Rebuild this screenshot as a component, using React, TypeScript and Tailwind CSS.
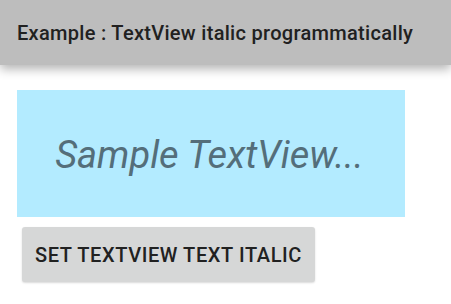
import React from "react";

export default function App() {
  return (
    <div className="w-[451px] h-[304px] bg-white overflow-hidden" style={{ fontFamily: "Roboto, 'Liberation Sans', sans-serif" }}>
      <div className="h-[65px] bg-[#bdbdbd] flex items-center pl-[17px] shadow-[0_4px_10px_rgba(0,0,0,0.3)] relative">
        <span className="text-[20px] font-medium text-[#212121] tracking-[0.3px]">Example : TextView italic programmatically</span>
      </div>
      <div className="pl-[17px] pt-[25px]">
        <div className="w-[388px] h-[127px] bg-[#b3ebff] flex items-center justify-center">
          <span className="text-[38px] italic text-[#546e7a] pr-[3px] pt-[4px]">Sample TextView...</span>
        </div>
        <button className="mt-[10px] ml-[5px] w-[293px] h-[55px] bg-[#d6d7d7] rounded-[3px] shadow-[0_1px_2px_rgba(0,0,0,0.15)] flex items-center justify-center text-[20px] font-medium text-[#212121] tracking-[0.6px]">
          SET TEXTVIEW TEXT ITALIC
        </button>
      </div>
    </div>
  );
}
